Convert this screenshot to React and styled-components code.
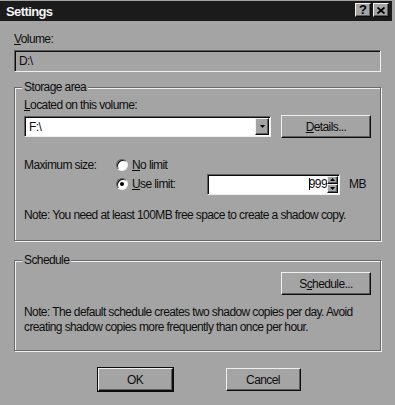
import React from 'react';
import styled, { createGlobalStyle } from 'styled-components';

const FACE = '#a4a4a4';
const DARK = '#5e5e5e';
const BLACK = '#0c0c0c';
const LIGHT = '#f0f0f0';

const Global = createGlobalStyle`
  html, body { margin: 0; padding: 0; background: ${FACE}; }
  body {
    font-family: "Liberation Sans", Arial, sans-serif;
    font-size: 12px;
    letter-spacing: -0.6px;
    color: #0e0e0e;
  }
  * { box-sizing: border-box; }
`;

const Window = styled.div`
  width: 395px;
  height: 405px;
  background: ${FACE};
  padding: 1px 3px 0 0;
  display: flex;
  flex-direction: column;
  overflow: hidden;
`;

const TitleBar = styled.div`
  height: 20px;
  background: #1b1b1b;
  display: flex;
  align-items: flex-start;
  padding: 2px 3px 0 6px;
`;

const Title = styled.div`
  color: #f4f4f4;
  font-weight: bold;
  font-size: 13px;
  letter-spacing: -0.6px;
  line-height: 16px;
  margin-top: 1px;
`;

const TitleButtons = styled.div`
  margin-left: auto;
  display: flex;
  gap: 2px;
`;

const raised = `
  background: ${FACE};
  border: 1px solid;
  border-color: ${LIGHT} ${BLACK} ${BLACK} ${LIGHT};
  box-shadow: inset -1px -1px 0 ${DARK};
`;

const sunken = `
  border: 1px solid;
  border-color: ${DARK} ${LIGHT} ${LIGHT} ${DARK};
  box-shadow: inset 1px 1px 0 ${BLACK};
`;

const CaptionButton = styled.div`
  ${raised}
  width: 16px;
  height: 14px;
  display: flex;
  align-items: center;
  justify-content: center;
  font-weight: bold;
  font-size: 13px;
  letter-spacing: 0;
  line-height: 12px;
  color: #000;
`;

const Body = styled.div`
  display: flex;
  flex-direction: column;
  padding: 11px 11px 0 14px;
`;

const Label = styled.div`
  line-height: 14px;
  white-space: nowrap;
`;

const DisabledField = styled.div`
  ${sunken}
  margin-top: 4px;
  height: 22px;
  display: flex;
  align-items: center;
  padding-left: 4px;
  background: ${FACE};
  line-height: 14px;
`;

const GroupBox = styled.fieldset`
  margin: ${p => p.$mt}px 0 0;
  padding: ${p => p.$pt}px 9px ${p => p.$pb}px;
  border: 1px solid #6a6a6a;
  box-shadow: inset 1px 1px 0 ${LIGHT}, 1px 1px 0 ${LIGHT};
  min-width: 0;
`;

const Legend = styled.legend`
  padding: 0 2px;
  margin-left: -2px;
  line-height: 14px;
  background: ${FACE};
`;

const ComboRow = styled.div`
  display: flex;
  align-items: center;
  margin-top: 3px;
  gap: 10px;
`;

const Combo = styled.div`
  ${sunken}
  width: 247px;
  height: 21px;
  background: #fff;
  display: flex;
  align-items: stretch;
  padding: 1px;
`;

const ComboText = styled.div`
  flex: 1;
  display: flex;
  align-items: center;
  padding-left: 3px;
  line-height: 14px;
`;

const ArrowButton = styled.div`
  ${raised}
  width: 14px;
  display: flex;
  align-items: center;
  justify-content: center;
`;

const PushButton = styled.div`
  ${raised}
  width: ${p => p.$w}px;
  height: ${p => p.$h}px;
  display: flex;
  align-items: center;
  justify-content: center;
  line-height: 14px;
  ${p => p.$default && `
    outline: 1px solid ${BLACK};
    outline-offset: 0;
  `}
`;

const SizeGrid = styled.div`
  display: grid;
  grid-template-columns: 92px 91px 133px auto;
  grid-template-rows: 16px 22px;
  align-items: center;
  margin-top: 19px;
`;

const RadioOption = styled.div`
  display: flex;
  align-items: center;
  gap: 4px;
  line-height: 14px;
  grid-column: 2;
`;

const RadioCircle = styled.div`
  width: 12px;
  height: 12px;
  border-radius: 50%;
  background: #fff;
  border: 1px solid;
  border-color: ${DARK} ${LIGHT} ${LIGHT} ${DARK};
  box-shadow: inset 1px 1px 0 ${BLACK};
  display: flex;
  align-items: center;
  justify-content: center;
  &::after {
    content: '';
    width: 4px;
    height: 4px;
    border-radius: 50%;
    background: ${p => (p.$checked ? '#000' : 'transparent')};
  }
`;

const Spinner = styled.div`
  ${sunken}
  height: 21px;
  background: #fff;
  display: flex;
  padding: 1px;
`;

const SpinText = styled.div`
  flex: 1;
  display: flex;
  align-items: center;
  justify-content: flex-end;
  line-height: 14px;
`;

const Caret = styled.span`
  display: inline-block;
  width: 1px;
  height: 12px;
  background: #000;
  margin-right: -1px;
`;

const SpinButtons = styled.div`
  width: 11px;
  display: flex;
  flex-direction: column;
`;

const SpinButton = styled.div`
  ${raised}
  flex: 1;
  display: flex;
  align-items: center;
  justify-content: center;
`;

const Unit = styled.div`
  padding-left: 9px;
  line-height: 14px;
`;

const Note = styled.div`
  margin-top: ${p => p.$mt}px;
  line-height: ${p => p.$lh || 14}px;
`;

const RightRow = styled.div`
  display: flex;
  justify-content: flex-end;
`;

const ButtonRow = styled.div`
  display: flex;
  justify-content: center;
  gap: 53px;
  margin-top: 17px;
  padding-left: 3px;
`;

const Tri = ({ up, w = 5 }) => {
  const h = Math.ceil(w / 2);
  return (
    <svg width={w} height={h} viewBox={`0 0 ${w} ${h}`}>
      <polygon
        points={up ? `0,${h} ${w},${h} ${w / 2},0` : `0,0 ${w},0 ${w / 2},${h}`}
        fill="#000"
      />
    </svg>
  );
};

const Radio = ({ checked, children }) => (
  <RadioOption>
    <RadioCircle $checked={checked} />
    <span>{children}</span>
  </RadioOption>
);

export default function App() {
  return (
    <>
      <Global />
      <Window>
        <TitleBar>
          <Title>Settings</Title>
          <TitleButtons>
            <CaptionButton>?</CaptionButton>
            <CaptionButton>
              <svg width="8" height="7" viewBox="0 0 8 7">
                <path d="M0.5 0.5 L7.5 6.5 M7.5 0.5 L0.5 6.5" stroke="#000" strokeWidth="1.8" />
              </svg>
            </CaptionButton>
          </TitleButtons>
        </TitleBar>
        <Body>
          <Label><u>V</u>olume:</Label>
          <DisabledField>D:\</DisabledField>

          <GroupBox $mt={8} $pt={4} $pb={18}>
            <Legend>Storage area</Legend>
            <Label><u>L</u>ocated on this volume:</Label>
            <ComboRow>
              <Combo>
                <ComboText>F:\</ComboText>
                <ArrowButton><Tri w={5} /></ArrowButton>
              </Combo>
              <PushButton $w={90} $h={23}><span><u>D</u>etails...</span></PushButton>
            </ComboRow>
            <SizeGrid>
              <Label>Maximum size:</Label>
              <Radio><u>N</u>o limit</Radio>
              <span />
              <span />
              <span />
              <Radio checked><u>U</u>se limit:</Radio>
              <Spinner>
                <SpinText><Caret />999</SpinText>
                <SpinButtons>
                  <SpinButton><Tri up w={5} /></SpinButton>
                  <SpinButton><Tri w={5} /></SpinButton>
                </SpinButtons>
              </Spinner>
              <Unit>MB</Unit>
            </SizeGrid>
            <Note $mt={13}>Note: You need at least 100MB free space to create a shadow copy.</Note>
          </GroupBox>

          <GroupBox $mt={12} $pt={5} $pb={15}>
            <Legend>Schedule</Legend>
            <RightRow>
              <PushButton $w={90} $h={23}><span>S<u>c</u>hedule...</span></PushButton>
            </RightRow>
            <Note $mt={10} $lh={15}>
              Note: The default schedule creates two shadow copies per day. Avoid creating shadow copies more frequently than once per hour.
            </Note>
          </GroupBox>

          <ButtonRow>
            <PushButton $w={75} $h={23} $default>OK</PushButton>
            <PushButton $w={75} $h={23}>Cancel</PushButton>
          </ButtonRow>
        </Body>
      </Window>
    </>
  );
}
